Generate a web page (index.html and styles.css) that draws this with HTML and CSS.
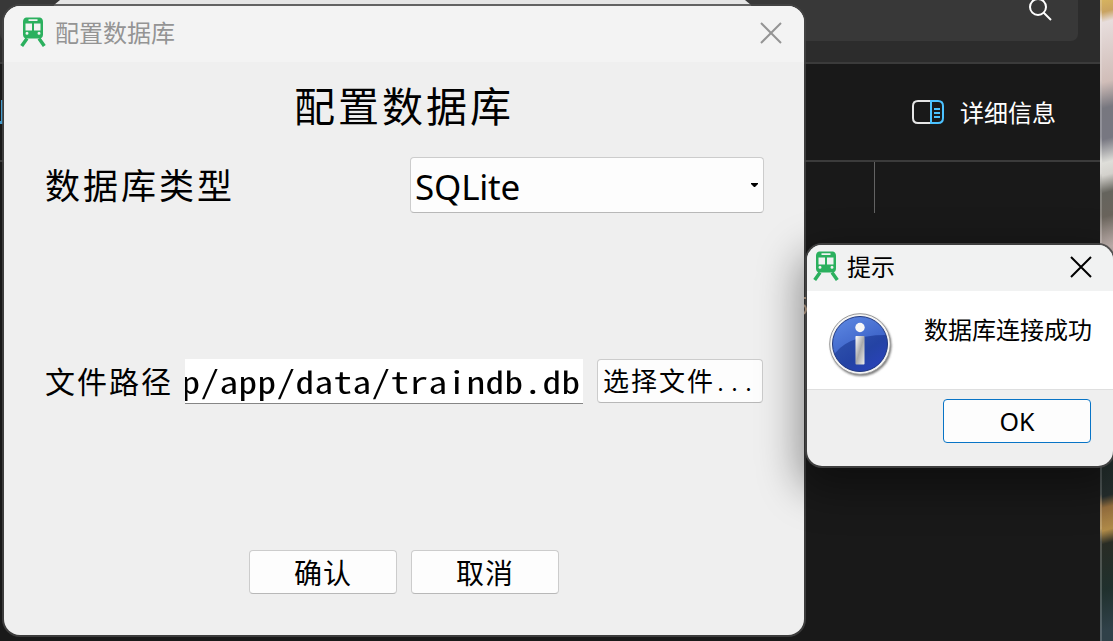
FILE: index.html
```html
<!DOCTYPE html>
<html lang="zh-CN">
<head>
<meta charset="utf-8">
<title>配置数据库</title>
<link rel="stylesheet" href="styles.css">
</head>
<body>
<svg class="defs" width="0" height="0" aria-hidden="true">
  <symbol id="train" viewBox="0 0 26 30">
    <path fill="#2bb05e" fill-rule="evenodd" d="M6 .5h14Q23 1.400 23 5v12.500q0 4-4 4H7q-4 0-4-4V5Q3 1.400 6 .5zM8.500 2.300v1.700h9V2.300zM5.500 6.500v7h6.500v-7zm8.500 0v7h6.500v-7zM7 14.800a1.500 1.500 0 1 0 0 3 1.500 1.500 0 0 0 0-3zm12 0a1.500 1.500 0 1 0 0 3 1.500 1.500 0 0 0 0-3z"/>
    <path d="M7 21.500 1.700 29M19 21.500 24.300 29" stroke="#2bb05e" stroke-width="3.500" fill="none"/>
  </symbol>
</svg>
<div class="desktop">
  <section class="explorer">
    <div class="address-row">
      <div class="search-box">
        <svg width="26" height="26" viewBox="0 0 26 26"><circle cx="11" cy="10" r="8" /><path d="M16.500 15.500 24 23"/></svg>
      </div>
    </div>
    <div class="toolbar">
      <svg width="32" height="24" viewBox="0 0 32 24"><path stroke="#e6e6e6" d="M18 1H6Q1 1 1 6v12q0 5 5 5h12"/><path stroke="#4cc2ff" d="M19 1h7q5 0 5 5v12q0 5-5 5h-7zM22 9h6M22 13h6M22 17h6"/></svg>
      <span>详细信息</span>
    </div>
    <div class="file-area"><div class="column-line"></div></div>
  </section>
  <div class="wallpaper"></div>
  <div class="back-window"></div>
  <div class="left-mark"></div>

  <main class="window config">
    <header class="titlebar">
      <svg class="train" width="26" height="30"><use href="#train"/></svg>
      <span class="caption">配置数据库</span>
      <svg class="close" width="22" height="22" viewBox="0 0 22 22"><path d="m1 1 20 20M21 1 1 21"/></svg>
    </header>
    <div class="config-body">
      <h1>配置数据库</h1>
      <div class="type-row">
        <span class="type-label">数据库类型</span>
        <div class="select"><span>SQLite</span><i class="arrow"></i></div>
      </div>
      <div class="path-row">
        <span class="path-label">文件路径</span>
        <div class="path-input"><span>p/app/data/traindb.db</span></div>
        <button class="button browse">选择文件<span class="dots">...</span></button>
      </div>
      <div class="actions">
        <button class="button">确认</button>
        <button class="button">取消</button>
      </div>
    </div>
  </main>

  <section class="window message">
    <header class="titlebar">
      <svg class="train" width="26" height="30"><use href="#train"/></svg>
      <span class="caption">提示</span>
      <svg class="close" width="22" height="22" viewBox="0 0 22 22"><path d="m1 1 20 20M21 1 1 21"/></svg>
    </header>
    <div class="message-body">
      <svg width="66" height="66" viewBox="0 0 66 66">
        <defs>
          <linearGradient id="blue" x1="0" y1="0" x2=".5" y2="1"><stop stop-color="#608be4"/><stop offset="1" stop-color="#2c50bb"/></linearGradient>
          <linearGradient id="deep" x1="0" y1="0" x2="1" y2="1"><stop stop-color="#3155ad"/><stop offset=".5" stop-color="#2443a4"/><stop offset="1" stop-color="#2c42c4"/></linearGradient>
          <linearGradient id="stem" x1="0" y1="0" x2="1" y2="1"><stop stop-color="#fff"/><stop offset=".5" stop-color="#aaa"/><stop offset="1" stop-color="#eee"/></linearGradient>
          <clipPath id="disc"><circle cx="32" cy="32" r="27.500"/></clipPath>
          <filter id="soft"><feGaussianBlur stdDeviation="1"/></filter>
        </defs>
        <circle cx="33" cy="33.500" r="30.500" fill="#777" filter="url(#soft)"/>
        <circle cx="32" cy="32" r="30.300" fill="#f4f4f4" stroke="#999"/>
        <circle cx="32" cy="32" r="27.500" fill="url(#blue)"/>
        <path clip-path="url(#disc)" fill="url(#deep)" d="M4 46Q17 22 61 23v39H4z"/>
        <circle cx="32" cy="32" r="27.500" fill="none" stroke="#243b80"/>
        <circle cx="32" cy="15.500" r="4.700" fill="#f7f7f7"/>
        <rect x="27.500" y="24" width="9" height="28.500" rx=".8" fill="url(#stem)"/>
      </svg>
      <p>数据库连接成功</p>
    </div>
    <footer><button class="button ok">OK</button></footer>
  </section>
  <svg class="file-edge" width="3" height="20" viewBox="0 0 3 20"><path d="M0 2h2M0 9q4 4 0 9" stroke="#94806f" stroke-width="2" fill="none"/></svg>
</div>
</body>
</html>
```
FILE: styles.css
```css
* { box-sizing: border-box; }
body { margin: 0; font-family: "Noto Sans", "Noto Sans CJK SC", sans-serif; }
svg { display: block; flex: none; }
.defs { position: absolute; }
.desktop { position: relative; width: 1113px; height: 641px; overflow: hidden; background: #191919; }

.explorer { position: absolute; inset: 0 13px 0 0; display: flex; flex-direction: column; background: #191919; }
.address-row { height: 64px; flex: none; padding-right: 22px; background: #2c2c2c; border-bottom: 2px solid #3b3b3b; }
.search-box { height: 41px; display: flex; justify-content: flex-end; padding-right: 25px; border-radius: 0 0 7px 7px; background: #383838; }
.search-box svg { fill: none; stroke: #fff; stroke-width: 2; margin-top: -3px; }
.toolbar { height: 98px; flex: none; display: flex; align-items: center; justify-content: flex-end; gap: 16px; padding: 0 44px 0 0; border-bottom: 2px solid #3b3b3b; color: #fff; font: 24px/36px "Noto Sans CJK SC", sans-serif; }
.toolbar svg { fill: none; stroke-width: 2; }
.file-area { flex: 1; padding-left: 874px; }
.column-line { width: 1px; height: 51px; background: #636363; }
.wallpaper { position: absolute; top: 0; right: 0; width: 13px; height: 641px; border-left: 2px solid #ffffff30; background: linear-gradient(165deg, #d6b35f 0, #c9a361 12px, #e7dddc 22px, #d0bdb8 80px, #77777f 105px, #777781 135px, #deded9 158px, #d3d1cc 170px, #65645d 187px, #6a645c 210px, #c7b8b4 240px, #263230 450px, #27302f 480px, #97703f 491px, #b08b49 513px, #292c25 526px, #20302d 570px, #304149 610px, #314149 641px); }
.back-window { position: absolute; left: 52px; top: -10px; width: 701px; height: 24px; border-radius: 20px 20px 0 0; background: #e5e5e5; clip-path: polygon(8px 10px, 693px 10px, 699px 15px, 701px 24px, 0 24px, 2px 15px); }
.left-mark { position: absolute; left: 0; top: 100px; width: 3px; height: 24px; border-right: 2px solid #439bcc; border-bottom: 3px solid #439bcc; }
.file-edge { position: absolute; left: 804px; top: 296px; }

.window { position: absolute; background: #efefef; overflow: hidden; }
.config { left: 4px; top: 6px; width: 800px; height: 629px; border-radius: 16px; box-shadow: 0 0 0 2px #454545d0; }
.titlebar { display: flex; align-items: center; background: #f3f3f3; }
.titlebar .caption { flex: 1; margin-top: -2px; font: 24px/36px "Noto Sans CJK SC", sans-serif; }
.close { fill: none; stroke: currentColor; stroke-width: 2; }
.config .titlebar { height: 56px; padding: 0 22px 2px 16px; color: #949494; }
.titlebar .train { margin-top: -2px; }
.config .caption { padding-left: 9px; }
.config-body { display: flex; flex-direction: column; padding: 0 41px; font-family: "Noto Sans CJK SC", sans-serif; }
h1 { margin: 12px 0 0; height: 62px; font-size: 41px; line-height: 60px; font-weight: 400; letter-spacing: 3px; text-align: center; }
.type-row { display: flex; justify-content: space-between; align-items: center; height: 56px; margin-top: 21px; margin-right: -1px; }
.type-label { margin-top: -2px; font-size: 35px; letter-spacing: 3px; line-height: 56px; }
.select { width: 354px; height: 56px; display: flex; align-items: center; justify-content: space-between; padding: 4px 5px 0 4px; border: 1px solid #ccc; border-bottom-color: #b8b8b8; border-radius: 4px; background: #fdfdfd; font: 35px/50px "Noto Sans", sans-serif; letter-spacing: -.2px; }
.arrow { width: 7px; height: 4px; margin-top: -4px; background: #000; clip-path: polygon(0 0, 100% 0, 100% 25%, 57% 100%, 43% 100%, 0 25%); }
.path-row { display: flex; align-items: center; height: 45px; margin-top: 146px; margin-right: -1px; }
.path-label { width: 140px; margin-top: -4px; font-size: 30px; letter-spacing: 2px; line-height: 44px; white-space: nowrap; }
.path-input { width: 398px; height: 45px; margin-right: 14px; display: flex; justify-content: flex-end; align-items: center; padding-right: 3px; overflow: hidden; background: #fff; border-bottom: 1px solid #868686; }
.path-input span { flex: none; font-size: 31px; line-height: 44px; letter-spacing: .33px; font-feature-settings: "hwid"; transform: scaleX(1.2); transform-origin: right; }
.button { width: 148px; height: 44px; padding: 0; border: 1px solid #ccc; border-bottom-color: #b8b8b8; border-radius: 4px; background: #fdfdfd; color: #000; font: 28px/42px "Noto Sans CJK SC", sans-serif; letter-spacing: 1px; }
.button.browse { width: 166px; margin-top: -1px; padding-bottom: 2px; line-height: 40px; font-size: 26px; letter-spacing: 2px; white-space: nowrap; }
.dots { font-size: 22px; letter-spacing: 3px; font-feature-settings: "hwid"; }
.actions { display: flex; justify-content: center; gap: 14px; margin-top: 146px; }

.message { left: 807px; top: 245px; width: 306px; height: 221px; border-radius: 15px; box-shadow: 0 0 0 2px #454545e0, 0 16px 42px 8px #0006; }
.message .titlebar { height: 46px; padding: 0 21px 2px 6px; background: #f1f2f2; }
.message .caption { padding-left: 8px; }
.message-body { display: flex; height: 99px; padding: 21px 0 0 21px; background: #fff; border-bottom: 1px solid #dfdfdf; }
.message-body p { margin: -1px 0 0 30px; font: 24px/36px "Noto Sans CJK SC", sans-serif; white-space: nowrap; }
.message footer { display: flex; justify-content: flex-end; padding: 9px 22px 0 0; }
.button.ok { border-color: #0874c6; font: 25px/42px "Noto Sans", sans-serif; letter-spacing: 0; }
```
